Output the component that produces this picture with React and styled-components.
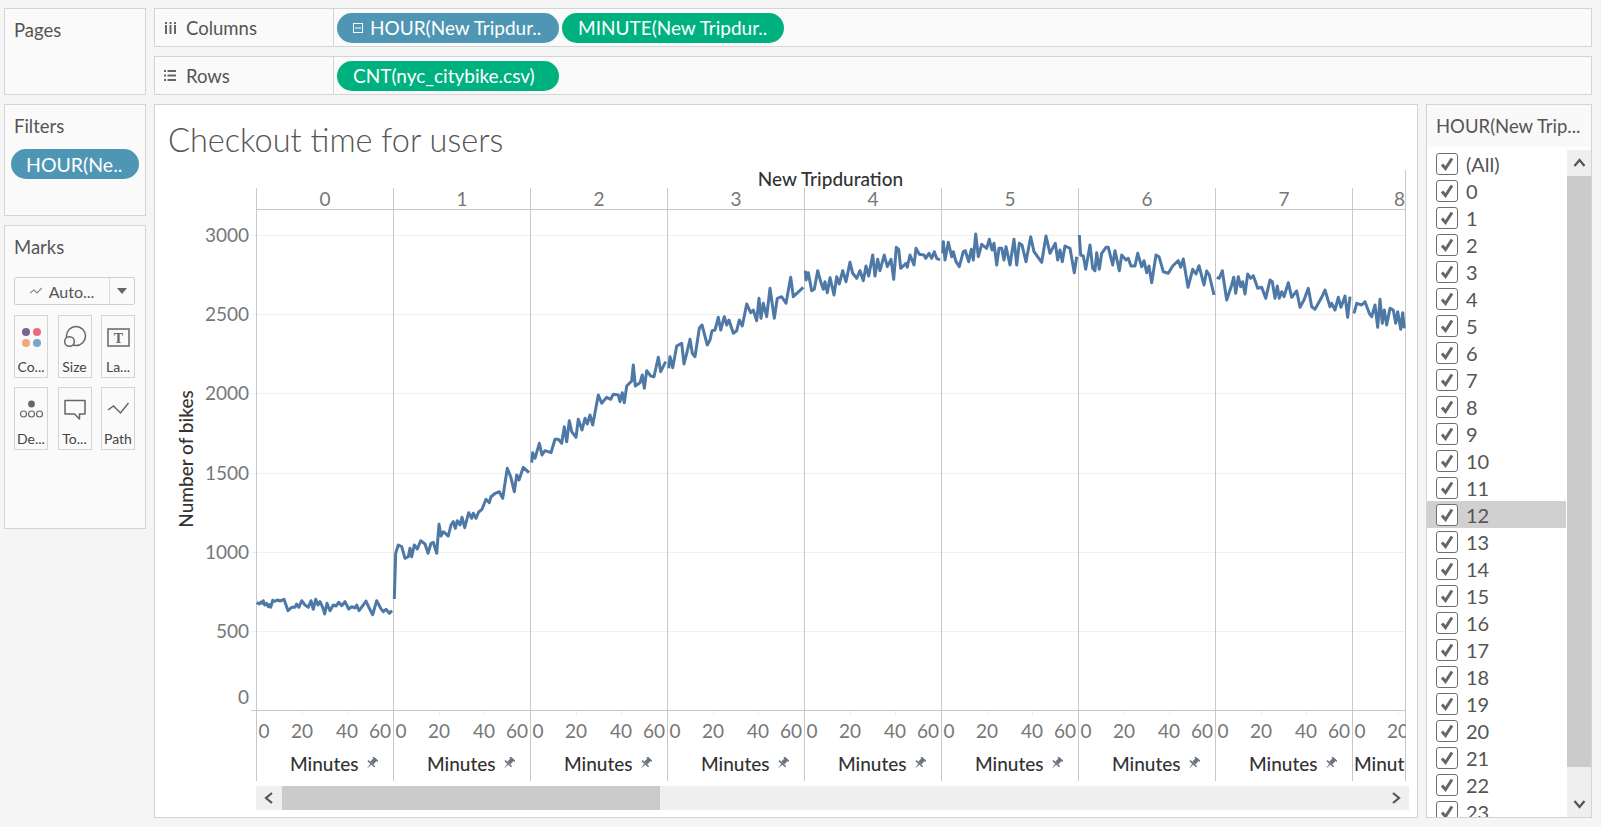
import React from 'react';
import styled, { createGlobalStyle } from 'styled-components';

const PANEL_WIDTH = 137;
const PLOT_LEFT = 256;
const PLOT_RIGHT = 1405;
const HOURS = [0, 1, 2, 3, 4, 5, 6, 7, 8];
const FILTER_ROWS = ['(All)', ...Array.from({ length: 24 }, (_, i) => String(i))];
const Y_TICKS = [
    { label: '3000', y: 235, labelY: 235 },
    { label: '2500', y: 314, labelY: 314 },
    { label: '2000', y: 393, labelY: 393 },
    { label: '1500', y: 473, labelY: 473 },
    { label: '1000', y: 552, labelY: 552 },
    { label: '500', y: 631, labelY: 631 },
    { label: '0', y: 711, labelY: 697 },
];
const X_TICKS = [
    { label: '0', x: 8, tick: false },
    { label: '20', x: 46, tick: true },
    { label: '40', x: 91, tick: true },
    { label: '60', x: 124, tick: false },
];

// line traced by hand, coordinates are in 3x crops with the origin given
function trace(ox, oy, pts) {
    return pts.map(([x, y]) => `${(ox + x / 3).toFixed(1)},${(oy + y / 3).toFixed(1)}`).join(' ');
}

const SERIES = [
    trace(250, 520, [[20,248],[28,252],[33,246],[38,250],[40,242],[44,255],[50,250],[55,260],[58,254],[62,262],[68,241],[74,244],[82,240],[90,243],[102,238],[114,272],[125,262],[135,262],[140,252],[147,262],[155,242],[165,255],[175,262],[183,242],[190,268],[197,238],[204,255],[210,245],[218,262],[224,282],[231,250],[240,272],[250,255],[258,258],[266,247],[275,257],[285,245],[296,267],[305,260],[315,264],[320,255],[327,272],[340,255],[348,243],[358,265],[368,284],[380,242],[392,265],[400,275],[408,268],[418,280],[426,272]]),
    trace(380, 300, [[43,897],[47,760],[55,735],[65,740],[75,775],[85,770],[90,745],[95,770],[103,735],[112,747],[122,722],[135,732],[144,760],[153,730],[160,727],[170,760],[177,673],[183,708],[190,695],[205,708],[213,675],[220,665],[226,685],[232,662],[240,675],[246,652],[254,683],[266,638],[275,655],[280,640],[288,655],[296,636],[306,628],[318,598],[328,608],[333,590],[346,580],[358,575],[368,595],[382,505],[392,530],[403,575],[410,525],[417,540],[430,502],[447,518]]),
    trace(380, 300, [[455,488],[458,458],[465,475],[478,430],[486,465],[495,452],[513,458],[525,418],[535,418],[545,430],[553,380],[560,425],[568,362],[575,395],[588,412],[595,358],[606,390],[615,355],[622,372],[630,345],[638,375],[655,285],[665,310],[680,292],[692,298],[700,283],[715,285],[720,305],[727,278],[733,308],[740,258],[755,243],[760,195],[766,258],[780,248],[787,225],[793,265],[800,212],[812,228],[822,230],[835,172],[842,215],[857,185]]),
    trace(380, 300, [[866,205],[870,170],[878,203],[890,138],[905,130],[912,192],[920,160],[930,118],[937,160],[945,170],[958,85],[966,75],[982,135],[990,120],[996,92],[1005,90],[1015,52],[1022,90],[1033,50],[1040,75],[1047,60],[1060,100],[1070,92],[1078,60],[1087,78],[1100,12],[1112,38],[1120,30],[1130,62]])
        + ' ' + trace(735, 260, [[72,115],[78,175],[85,130],[95,170],[105,85],[118,175],[127,115],[140,110],[153,130],[167,52],[175,110],[205,82]]),
    trace(780, 210, [[76,182],[78,210],[85,188],[95,242],[103,238],[113,182],[122,215],[130,238],[135,215],[142,248],[150,203],[162,255],[170,200],[178,222],[188,182],[198,215],[210,157],[218,190],[230,205],[240,182],[250,212],[258,168],[266,198],[278,135],[285,198],[293,148],[300,182],[313,135],[322,170],[333,148],[341,208],[349,112],[356,118],[362,175],[378,160],[382,172],[390,135],[402,165],[408,115],[418,133],[432,135],[437,145],[447,130],[455,145],[463,125],[470,145],[480,150]]),
    trace(780, 210, [[488,130],[490,95],[495,150],[505,97],[515,140],[520,125],[528,155],[538,170],[550,125],[556,122],[566,155],[574,118],[580,150],[587,72],[595,140],[605,103],[620,115],[628,88],[636,120],[642,100],[650,165],[657,115],[665,115],[672,150],[678,110],[690,165],[702,88],[710,165],[718,100],[726,105],[738,155],[752,80],[762,125],[785,157],[798,78],[810,130],[826,100],[833,150],[840,120],[847,155],[855,108],[870,115],[883,188],[890,140]]),
    trace(1060, 210, [[58,75],[62,135],[70,138],[77,178],[90,105],[98,175],[105,182],[110,128],[118,178],[125,130],[138,112],[145,112],[158,165],[165,122],[178,182],[185,135],[198,150],[205,145],[213,168],[225,168],[233,130],[245,170],[252,152],[260,188],[267,168],[275,218],[288,135],[297,140],[310,185],[325,190],[338,168],[355,152],[362,172],[370,147],[384,232],[398,178],[408,192],[417,167],[432,225],[440,183],[448,195],[462,255]]),
    trace(1060, 210, [[470,202],[478,205],[487,182],[500,270],[515,225],[521,202],[527,250],[535,200],[542,230],[548,215],[555,252],[563,192],[572,205],[580,197],[593,235],[605,232],[617,265],[630,210],[637,215],[645,265],[652,228],[658,265],[665,245],[672,260],[685,218],[695,262],[710,243],[720,292],[732,270],[745,235],[755,290],[765,298],[785,262],[795,240],[810,290],[815,280],[825,300],[835,262],[843,292],[855,258],[863,322],[870,260]]),
    trace(1350, 290, [[12,70],[20,40],[35,45],[45,35],[58,70],[65,80],[75,45],[83,112],[90,28],[97,100],[103,60],[110,105],[120,55],[130,60],[137,100],[143,65],[152,118],[158,68],[163,115]]),
];

const GlobalStyle = createGlobalStyle`
    html, body {
        margin: 0;
        padding: 0;
        background: #f5f5f5;
    }
    * {
        box-sizing: border-box;
    }
`;

const Page = styled.div`
    display: flex;
    gap: 8px;
    width: 1601px;
    height: 827px;
    padding: 8px 9px 9px 4px;
    overflow: hidden;
    font-family: Lato, "Liberation Sans", sans-serif;
    color: #555;
`;

const LeftColumn = styled.div`
    display: flex;
    flex-direction: column;
    gap: 9px;
    width: 142px;
    flex-shrink: 0;
`;

const Card = styled.div`
    height: ${props => props.$height}px;
    padding: 11px 9px;
    background: #fafafa;
    border: 1px solid #d4d4d4;
`;

const CardTitle = styled.div`
    font-size: 18.5px;
    line-height: 21px;
    color: #555;
    margin-bottom: ${props => props.$gap || 0}px;
`;

const FilterPill = styled.div`
    display: flex;
    align-items: center;
    width: 128px;
    height: 30px;
    margin: 12px 0 0 -3px;
    padding-left: 15px;
    border-radius: 15px;
    background: #4e96b4;
    color: #fff;
    font-size: 19.5px;
    white-space: nowrap;
`;

const MarkSelect = styled.div`
    display: flex;
    align-items: center;
    width: 121px;
    height: 28px;
    margin-top: -1px;
    border: 1px solid #d0d0d0;
    border-radius: 2px;
    font-size: 16px;
`;

const MarkSelectMain = styled.div`
    display: flex;
    align-items: center;
    justify-content: center;
    gap: 7px;
    width: 95px;
    height: 100%;
    border-right: 1px solid #dcdcdc;
`;

const MarkSelectCaret = styled.div`
    flex: 1;
    display: flex;
    justify-content: center;
    &::after {
        content: '';
        border-left: 5px solid transparent;
        border-right: 5px solid transparent;
        border-top: 6px solid #666;
    }
`;

const MarkGrid = styled.div`
    display: grid;
    grid-template-columns: 34px 34px 34px;
    grid-auto-rows: 63px;
    justify-content: space-between;
    row-gap: 9px;
    width: 121px;
    margin-top: 10px;
`;

const MarkButton = styled.div`
    display: flex;
    flex-direction: column;
    align-items: center;
    border: 1px solid #d4d4d4;
    font-size: 14px;
    line-height: 17px;
    color: #444;
    overflow: hidden;
    svg {
        display: block;
        flex-shrink: 0;
        margin-bottom: 3px;
    }
`;

const Main = styled.div`
    flex: 1;
    display: flex;
    flex-direction: column;
    gap: 9px;
    min-width: 0;
`;

const ShelfRow = styled.div`
    display: flex;
    height: 39px;
    background: #fafafa;
    border: 1px solid #d4d4d4;
`;

const ShelfLabel = styled.div`
    display: flex;
    align-items: center;
    gap: 10px;
    width: 179px;
    padding-left: 9px;
    border-right: 1px solid #d4d4d4;
    font-size: 18.5px;
    color: #555;
`;

const ShelfIcon = styled.div`
    display: flex;
    justify-content: center;
    flex: 0 0 12px;
`;

const ShelfPills = styled.div`
    display: flex;
    align-items: center;
    gap: 3px;
    padding-left: 3px;
`;

const Pill = styled.div`
    display: flex;
    align-items: center;
    gap: 7px;
    width: 222px;
    height: 30px;
    padding-left: 16px;
    border-radius: 15px;
    background: ${props => props.$kind === 'green' ? '#00b180' : '#4e96b4'};
    color: #fff;
    font-size: 19px;
    white-space: nowrap;
    overflow: hidden;
`;

const Content = styled.div`
    flex: 1;
    display: flex;
    gap: 8px;
    min-height: 0;
`;

const ChartCard = styled.div`
    display: flex;
    flex-direction: column;
    width: 1264px;
    background: #fff;
    border: 1px solid #d4d4d4;
`;

const ChartTitle = styled.div`
    height: 65px;
    padding: 15px 0 0 13px;
    font-size: 32.5px;
    line-height: 40px;
    font-weight: 300;
    color: #555;
`;

const ColumnHeader = styled.div`
    width: 1150px;
    margin-left: 101px;
    border-right: 1px solid #c8c8c8;
`;

const AxisTitle = styled.div`
    height: 18px;
    font-size: 19px;
    line-height: 18px;
    font-weight: 500;
    text-align: center;
    color: #333;
`;

const HeaderRow = styled.div`
    display: flex;
    height: 22px;
    border-bottom: 1px solid #c8c8c8;
    overflow: hidden;
`;

const HeaderCell = styled.div`
    flex: 0 0 ${props => props.$width}px;
    border-left: 1px solid #c8c8c8;
    font-size: 19px;
    line-height: 22px;
    color: #777;
    text-align: ${props => props.$last ? 'right' : 'center'};
`;

const Plot = styled.svg`
    display: block;
    flex-shrink: 0;
`;

const AxisLabel = styled.text`
    font-family: Lato, "Liberation Sans", sans-serif;
    font-size: 19px;
    fill: #777;
`;

const AxisName = styled.text`
    font-family: Lato, "Liberation Sans", sans-serif;
    font-size: 19px;
    font-weight: 500;
    fill: #333;
`;

const MinutesRow = styled.div`
    display: flex;
    width: 1150px;
    height: 36px;
    margin-left: 101px;
    border-right: 1px solid #c8c8c8;
    overflow: hidden;
`;

const MinutesCell = styled.div`
    flex: 0 0 ${props => props.$width}px;
    display: flex;
    align-items: center;
    gap: 6px;
    padding-left: ${props => props.$last ? 1 : 33}px;
    border-left: 1px solid #c8c8c8;
    font-size: 19px;
    font-weight: 500;
    color: #333;
    overflow: hidden;
    white-space: nowrap;
`;

const HScroll = styled.div`
    display: flex;
    align-items: center;
    width: 1153px;
    height: 24px;
    margin: 5px 0 0 101px;
    background: #efefef;
`;

const ScrollButton = styled.div`
    flex: 0 0 26px;
    display: flex;
    align-items: center;
    justify-content: center;
`;

const HThumb = styled.div`
    flex: 0 0 378px;
    height: 100%;
    background: #cbcbcb;
`;

const HSpacer = styled.div`
    flex: 1;
`;

const FilterCard = styled.div`
    display: flex;
    flex-direction: column;
    flex: 1;
    background: #fff;
    border: 1px solid #d4d4d4;
    overflow: hidden;
`;

const FilterHeader = styled.div`
    height: 42px;
    padding: 11px 0 0 9px;
    background: #f9f9f9;
    font-size: 18.5px;
    line-height: 21px;
    color: #555;
    white-space: nowrap;
`;

const FilterBody = styled.div`
    flex: 1;
    display: flex;
    min-height: 0;
    padding-top: 3px;
`;

const FilterList = styled.div`
    flex: 1;
    overflow: hidden;
`;

const FilterRow = styled.div`
    display: flex;
    align-items: center;
    gap: 8px;
    height: 27px;
    padding-left: 9px;
    background: ${props => props.$selected ? '#d0d0d0' : 'transparent'};
    font-size: 20px;
    color: #555;
`;

const CheckBox = styled.div`
    display: flex;
    align-items: center;
    justify-content: center;
    width: 22px;
    height: 22px;
    background: #fff;
    border: 1px solid #6f6f6f;
    border-radius: 3px;
`;

const VScroll = styled.div`
    display: flex;
    flex-direction: column;
    flex: 0 0 24px;
    margin-left: 1px;
    background: #efefef;
`;

const VButton = styled.div`
    display: flex;
    align-items: center;
    justify-content: center;
    height: 26px;
`;

const VThumb = styled.div`
    height: 591px;
    background: #cbcbcb;
`;

const VSpacer = styled.div`
    flex: 1;
`;

function Chevron({ dir }) {
    const points = {
        left: '8,1 2,6 8,11',
        right: '2,1 8,6 2,11',
        up: '1,8 6,2 11,8',
        down: '1,2 6,8 11,2',
    };
    const wide = dir === 'up' || dir === 'down';
    return (
        <svg width={wide ? 13 : 10} height={wide ? 10 : 12} viewBox={wide ? '0 0 12 10' : '0 0 10 12'}>
            <polyline points={points[dir]} fill="none" stroke="#555" strokeWidth="2.2" />
        </svg>
    );
}

function Check() {
    return (
        <svg width="14" height="14" viewBox="0 0 14 14">
            <polyline points="2,7.5 5.5,11.5 12,1.5" fill="none" stroke="#666" strokeWidth="3" />
        </svg>
    );
}

function Pin() {
    return (
        <svg width="13" height="13" viewBox="0 0 13 13">
            <g transform="rotate(42 6.5 6.5)" fill="#6b7480">
                <rect x="4.4" y="0" width="4.2" height="6" />
                <rect x="3" y="0" width="7" height="1.4" />
                <polygon points="2,6 11,6 11,7.6 2,7.6" />
                <polygon points="5.8,7.6 7.2,7.6 6.5,13.5" />
            </g>
        </svg>
    );
}

function ColumnsIcon() {
    return (
        <svg width="11" height="12" viewBox="0 0 11 12">
            <g fill="#666">
                <rect x="0" y="3" width="2" height="9" />
                <rect x="4.5" y="3" width="2" height="9" />
                <rect x="9" y="3" width="2" height="9" />
                <rect x="0" y="0" width="2" height="2" />
                <rect x="4.5" y="0" width="2" height="2" />
                <rect x="9" y="0" width="2" height="2" />
            </g>
        </svg>
    );
}

function RowsIcon() {
    return (
        <svg width="12" height="11" viewBox="0 0 12 11">
            <g fill="#666">
                <rect x="0" y="0" width="2" height="2" />
                <rect x="0" y="4.5" width="2" height="2" />
                <rect x="0" y="9" width="2" height="2" />
                <rect x="3.5" y="0" width="8.5" height="2" />
                <rect x="3.5" y="4.5" width="8.5" height="2" />
                <rect x="3.5" y="9" width="8.5" height="2" />
            </g>
        </svg>
    );
}

function CollapseIcon() {
    return (
        <svg width="10" height="10" viewBox="0 0 10 10">
            <rect x="0.5" y="0.5" width="9" height="9" fill="none" stroke="#fff" />
            <rect x="2" y="4.5" width="6" height="1" fill="#fff" />
        </svg>
    );
}

const markIcons = {
    color: (
        <g>
            <circle cx="11" cy="16" r="4" fill="#7b6294" />
            <circle cx="22" cy="16" r="4" fill="#ee6b7c" />
            <circle cx="11" cy="27" r="4" fill="#f2a97a" />
            <circle cx="22" cy="27" r="4" fill="#7ba3cf" />
        </g>
    ),
    size: (
        <g fill="none" stroke="#666" strokeWidth="1.5">
            <circle cx="18" cy="20" r="9.5" />
            <circle cx="11.5" cy="25.5" r="4.8" fill="#fafafa" />
        </g>
    ),
    label: (
        <g>
            <rect x="6" y="13" width="21" height="17" fill="none" stroke="#666" strokeWidth="1.5" />
            <text x="16.5" y="26.5" textAnchor="middle" fontFamily="Liberation Serif, serif" fontWeight="700" fontSize="14" fill="#666">T</text>
        </g>
    ),
    detail: (
        <g fill="none" stroke="#666" strokeWidth="1.2">
            <circle cx="16.5" cy="16" r="3.4" fill="#666" stroke="none" />
            <circle cx="8.5" cy="26" r="3" />
            <circle cx="16.5" cy="26" r="3" />
            <circle cx="24.5" cy="26" r="3" />
        </g>
    ),
    tooltip: (
        <path d="M7 12.5 H27 V26 H21.5 V31 L16.5 26 H7 Z" fill="none" stroke="#666" strokeWidth="1.5" strokeLinejoin="round" />
    ),
    path: (
        <polyline points="6,22 11.5,18 18.5,25 26.5,15" fill="none" stroke="#666" strokeWidth="1.5" />
    ),
};

const MARKS = [
    { key: 'color', label: 'Co...' },
    { key: 'size', label: 'Size' },
    { key: 'label', label: 'La...' },
    { key: 'detail', label: 'De...' },
    { key: 'tooltip', label: 'To...' },
    { key: 'path', label: 'Path' },
];

function panelWidth(index) {
    // last panel is cut off by the pane edge
    return index === HOURS.length - 1 ? 53 : PANEL_WIDTH;
}

function ChartPlot() {
    return (
        <Plot width="1251" height="535" viewBox="155 210 1251 535">
            {Y_TICKS.slice(0, 6).map(t => (
                <line key={t.label} x1="251" x2={PLOT_RIGHT} y1={t.y + 0.5} y2={t.y + 0.5} stroke="#f0f0f0" />
            ))}
            <line x1="251" x2={PLOT_RIGHT} y1="710.5" y2="710.5" stroke="#c8c8c8" />
            {HOURS.map(h => (
                <line key={h} x1={PLOT_LEFT + h * PANEL_WIDTH + 0.5} x2={PLOT_LEFT + h * PANEL_WIDTH + 0.5} y1="210" y2="745" stroke="#c8c8c8" />
            ))}
            <line x1={PLOT_RIGHT + 0.5} x2={PLOT_RIGHT + 0.5} y1="210" y2="745" stroke="#c8c8c8" />
            {Y_TICKS.map(t => (
                <AxisLabel key={t.label} x="249" y={t.labelY + 7} textAnchor="end">{t.label}</AxisLabel>
            ))}
            <AxisName transform="translate(193 459) rotate(-90)" textAnchor="middle">Number of bikes</AxisName>
            {HOURS.map(h => X_TICKS.filter(t => PLOT_LEFT + h * PANEL_WIDTH + t.x < PLOT_RIGHT).map(t => (
                <g key={`${h}-${t.label}`}>
                    {t.tick && (
                        <line x1={PLOT_LEFT + h * PANEL_WIDTH + t.x + 0.5} x2={PLOT_LEFT + h * PANEL_WIDTH + t.x + 0.5} y1="711" y2="715" stroke="#eee" />
                    )}
                    <AxisLabel x={PLOT_LEFT + h * PANEL_WIDTH + t.x} y="738" textAnchor="middle">{t.label}</AxisLabel>
                </g>
            )))}
            {SERIES.map((points, i) => (
                <polyline key={i} points={points} fill="none" stroke="#4e79a7" strokeWidth="3" strokeLinejoin="round" strokeLinecap="butt" />
            ))}
        </Plot>
    );
}

export default function App() {
    return (
        <Page>
            <GlobalStyle />
            <LeftColumn>
                <Card $height={87}>
                    <CardTitle>Pages</CardTitle>
                </Card>
                <Card $height={112}>
                    <CardTitle>Filters</CardTitle>
                    <FilterPill>HOUR(Ne..</FilterPill>
                </Card>
                <Card $height={304}>
                    <CardTitle $gap={20}>Marks</CardTitle>
                    <MarkSelect>
                        <MarkSelectMain>
                            <svg width="12" height="8" viewBox="0 0 12 8">
                                <polyline points="0,6 4,3 7,6 12,1" fill="none" stroke="#888" strokeWidth="1.2" />
                            </svg>
                            Auto...
                        </MarkSelectMain>
                        <MarkSelectCaret />
                    </MarkSelect>
                    <MarkGrid>
                        {MARKS.map(m => (
                            <MarkButton key={m.key}>
                                <svg width="33" height="39" viewBox="0 0 33 39">{markIcons[m.key]}</svg>
                                {m.label}
                            </MarkButton>
                        ))}
                    </MarkGrid>
                </Card>
            </LeftColumn>
            <Main>
                <ShelfRow>
                    <ShelfLabel><ShelfIcon><ColumnsIcon /></ShelfIcon>Columns</ShelfLabel>
                    <ShelfPills>
                        <Pill><CollapseIcon />HOUR(New Tripdur..</Pill>
                        <Pill $kind="green">MINUTE(New Tripdur..</Pill>
                    </ShelfPills>
                </ShelfRow>
                <ShelfRow>
                    <ShelfLabel><ShelfIcon><RowsIcon /></ShelfIcon>Rows</ShelfLabel>
                    <ShelfPills>
                        <Pill $kind="green">CNT(nyc_citybike.csv)</Pill>
                    </ShelfPills>
                </ShelfRow>
                <Content>
                    <ChartCard>
                        <ChartTitle>Checkout time for users</ChartTitle>
                        <ColumnHeader>
                            <AxisTitle>New Tripduration</AxisTitle>
                            <HeaderRow>
                                {HOURS.map((h, i) => (
                                    <HeaderCell key={h} $width={panelWidth(i)} $last={i === HOURS.length - 1}>{h}</HeaderCell>
                                ))}
                            </HeaderRow>
                        </ColumnHeader>
                        <ChartPlot />
                        <MinutesRow>
                            {HOURS.map((h, i) => (
                                <MinutesCell key={h} $width={panelWidth(i)} $last={i === HOURS.length - 1}>
                                    Minutes <Pin />
                                </MinutesCell>
                            ))}
                        </MinutesRow>
                        <HScroll>
                            <ScrollButton><Chevron dir="left" /></ScrollButton>
                            <HThumb />
                            <HSpacer />
                            <ScrollButton><Chevron dir="right" /></ScrollButton>
                        </HScroll>
                    </ChartCard>
                    <FilterCard>
                        <FilterHeader>HOUR(New Trip...</FilterHeader>
                        <FilterBody>
                            <FilterList>
                                {FILTER_ROWS.map(r => (
                                    <FilterRow key={r} $selected={r === '12'}>
                                        <CheckBox><Check /></CheckBox>
                                        {r}
                                    </FilterRow>
                                ))}
                            </FilterList>
                            <VScroll>
                                <VButton><Chevron dir="up" /></VButton>
                                <VThumb />
                                <VSpacer />
                                <VButton><Chevron dir="down" /></VButton>
                            </VScroll>
                        </FilterBody>
                    </FilterCard>
                </Content>
            </Main>
        </Page>
    );
}
